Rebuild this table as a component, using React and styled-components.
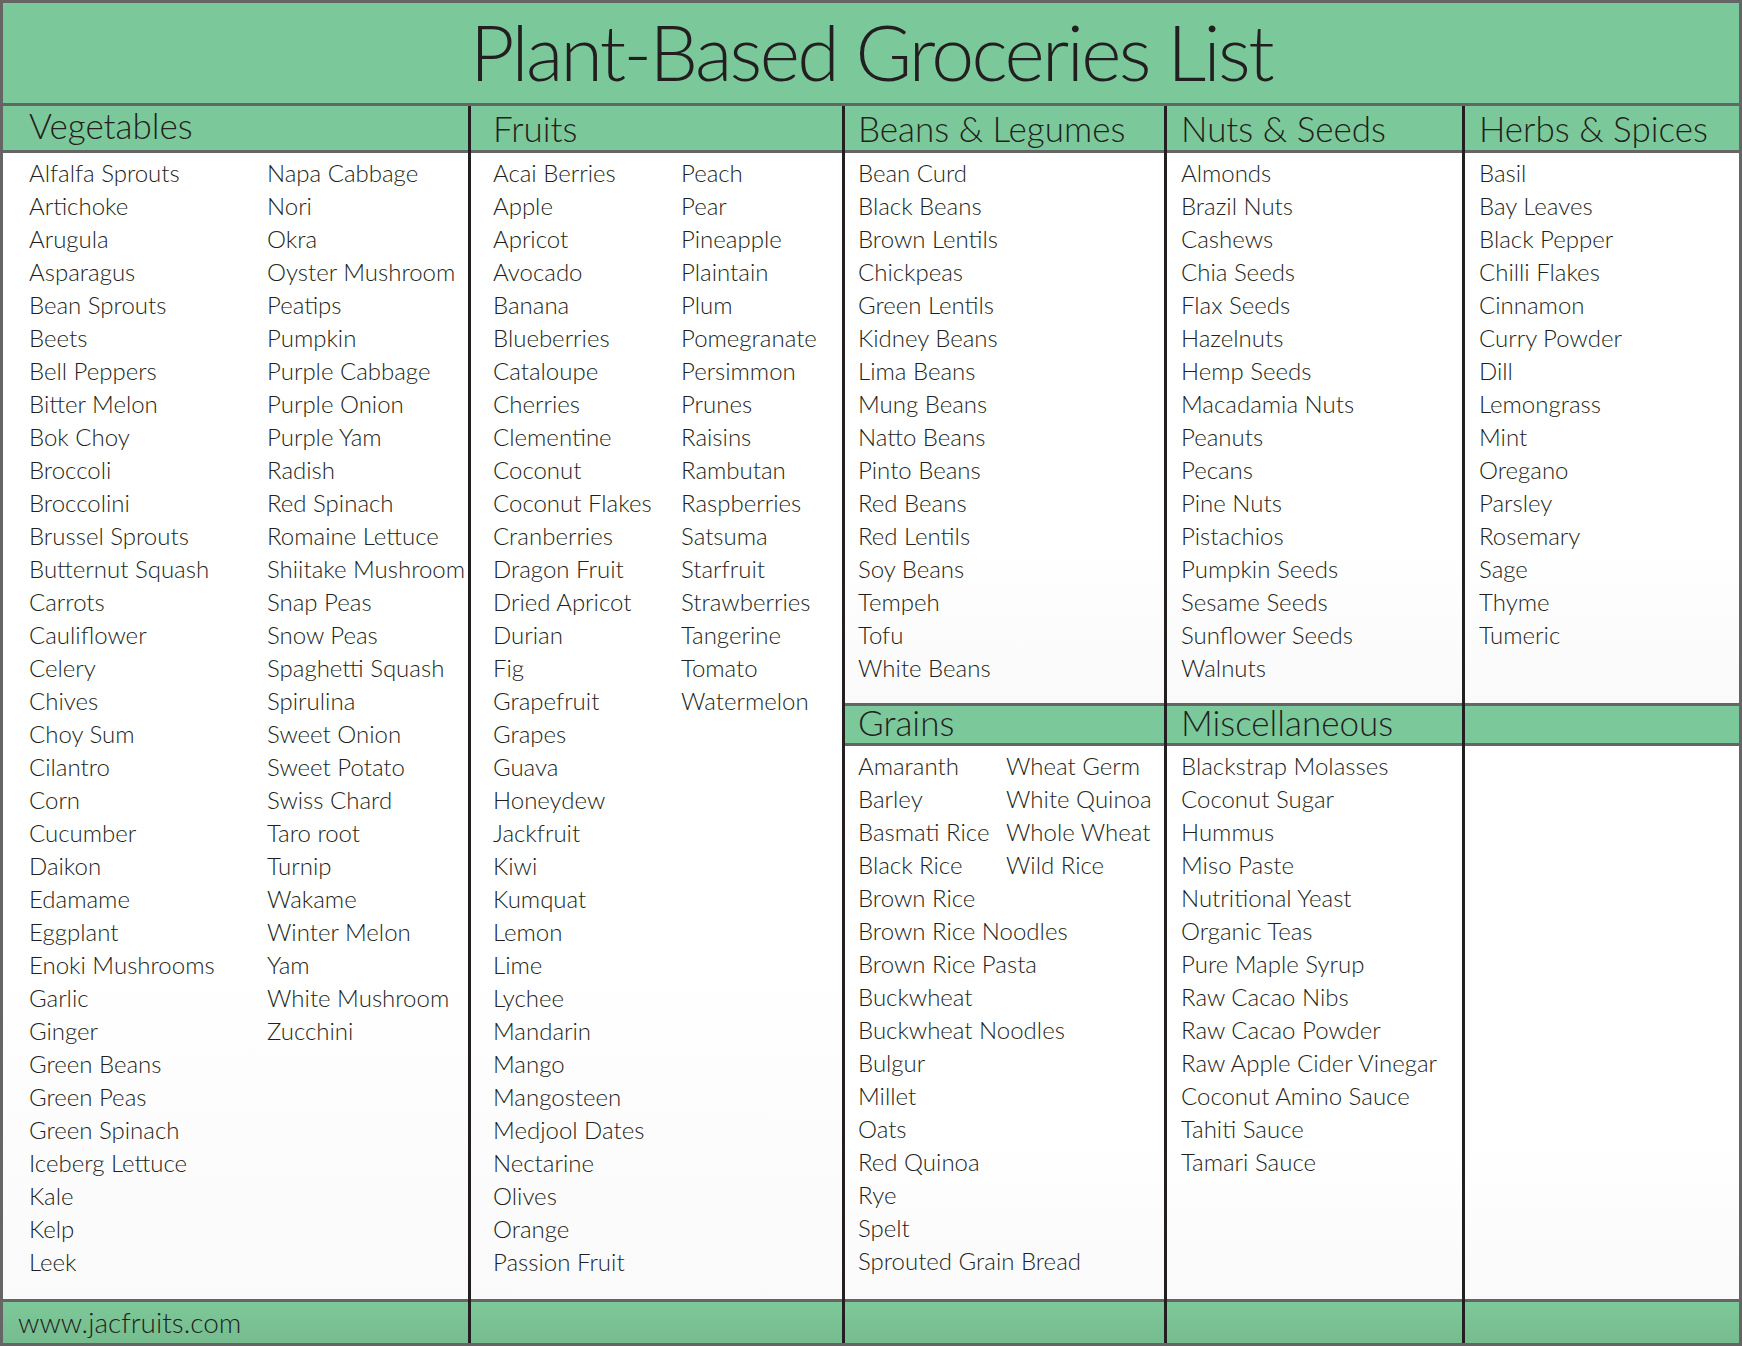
import React from "react";
import styled, { createGlobalStyle } from "styled-components";

const GlobalStyle = createGlobalStyle`
  html, body {
    margin: 0;
    padding: 0;
    background: #ffffff;
  }
  * {
    box-sizing: border-box;
  }
`;

const green = "#7bc99a";
const gray = "#656565";
const ink = "#231f20";

const Sheet = styled.div`
  width: 1742px;
  height: 1346px;
  border: 3px solid ${gray};
  display: flex;
  flex-direction: column;
  font-family: "Lato", "Liberation Sans", sans-serif;
  font-weight: 300;
  color: ${ink};
`;

const TitleBar = styled.div`
  height: 103px;
  flex: none;
  background: ${green};
  border-bottom: 3px solid ${gray};
  display: flex;
  align-items: center;
  justify-content: center;
`;

const Title = styled.h1`
  margin: 0;
  font-size: 77px;
  font-weight: 300;
  line-height: 1;
  letter-spacing: -2.6px;
  padding-bottom: 4px;
`;

const Board = styled.div`
  flex: 1;
  display: grid;
  grid-template-columns: 465px 371px 319px 295px 1fr;
  column-gap: 3px;
  background: ${ink};
  min-height: 0;
`;

const Column = styled.div`
  display: flex;
  flex-direction: column;
  background: #ffffff;
  min-width: 0;
`;

const Header = styled.div`
  height: 47px;
  flex: none;
  background: ${green};
  border-bottom: 3px solid ${gray};
  padding-left: ${(p) => p.$indent}px;
  padding-top: ${(p) => (p.$lift ? 0 : 3)}px;
  font-size: 35px;
  line-height: 39px;
  white-space: nowrap;
`;

const Band = styled(Header)`
  height: 43px;
  border-top: 3px solid ${gray};
  padding-top: 0;
  line-height: 33px;
`;

const Body = styled.div`
  display: flex;
  padding-left: ${(p) => p.$indent}px;
  padding-top: 3px;
  ${(p) => (p.$fixed ? `height: ${p.$fixed}px; flex: none;` : "flex: 1;")}
  background: linear-gradient(#ffffff 70%, #fafafa);
`;

const List = styled.ul`
  list-style: none;
  margin: 0;
  padding: 0;
  width: ${(p) => (p.$width ? `${p.$width}px` : "auto")};
  flex: none;
`;

const Item = styled.li`
  font-size: 24px;
  line-height: 33px;
  white-space: nowrap;
`;

const Footer = styled.div`
  height: 44px;
  flex: none;
  border-top: 3px solid ${gray};
  background: linear-gradient(#7dc89a, #76bc8e);
  padding-left: 15px;
  font-size: 28px;
  line-height: 40px;
  white-space: nowrap;
`;

const vegA = [
  "Alfalfa Sprouts", "Artichoke", "Arugula", "Asparagus", "Bean Sprouts", "Beets",
  "Bell Peppers", "Bitter Melon", "Bok Choy", "Broccoli", "Broccolini", "Brussel Sprouts",
  "Butternut Squash", "Carrots", "Cauliflower", "Celery", "Chives", "Choy Sum", "Cilantro",
  "Corn", "Cucumber", "Daikon", "Edamame", "Eggplant", "Enoki Mushrooms", "Garlic", "Ginger",
  "Green Beans", "Green Peas", "Green Spinach", "Iceberg Lettuce", "Kale", "Kelp", "Leek",
];
const vegB = [
  "Napa Cabbage", "Nori", "Okra", "Oyster Mushroom", "Peatips", "Pumpkin", "Purple Cabbage",
  "Purple Onion", "Purple Yam", "Radish", "Red Spinach", "Romaine Lettuce", "Shiitake Mushroom",
  "Snap Peas", "Snow Peas", "Spaghetti Squash", "Spirulina", "Sweet Onion", "Sweet Potato",
  "Swiss Chard", "Taro root", "Turnip", "Wakame", "Winter Melon", "Yam", "White Mushroom", "Zucchini",
];
const fruitA = [
  "Acai Berries", "Apple", "Apricot", "Avocado", "Banana", "Blueberries", "Cataloupe", "Cherries",
  "Clementine", "Coconut", "Coconut Flakes", "Cranberries", "Dragon Fruit", "Dried Apricot", "Durian",
  "Fig", "Grapefruit", "Grapes", "Guava", "Honeydew", "Jackfruit", "Kiwi", "Kumquat", "Lemon", "Lime",
  "Lychee", "Mandarin", "Mango", "Mangosteen", "Medjool Dates", "Nectarine", "Olives", "Orange", "Passion Fruit",
];
const fruitB = [
  "Peach", "Pear", "Pineapple", "Plaintain", "Plum", "Pomegranate", "Persimmon", "Prunes", "Raisins",
  "Rambutan", "Raspberries", "Satsuma", "Starfruit", "Strawberries", "Tangerine", "Tomato", "Watermelon",
];
const beans = [
  "Bean Curd", "Black Beans", "Brown Lentils", "Chickpeas", "Green Lentils", "Kidney Beans", "Lima Beans",
  "Mung Beans", "Natto Beans", "Pinto Beans", "Red Beans", "Red Lentils", "Soy Beans", "Tempeh", "Tofu", "White Beans",
];
const nuts = [
  "Almonds", "Brazil Nuts", "Cashews", "Chia Seeds", "Flax Seeds", "Hazelnuts", "Hemp Seeds", "Macadamia Nuts",
  "Peanuts", "Pecans", "Pine Nuts", "Pistachios", "Pumpkin Seeds", "Sesame Seeds", "Sunflower Seeds", "Walnuts",
];
const herbs = [
  "Basil", "Bay Leaves", "Black Pepper", "Chilli Flakes", "Cinnamon", "Curry Powder", "Dill", "Lemongrass",
  "Mint", "Oregano", "Parsley", "Rosemary", "Sage", "Thyme", "Tumeric",
];
const grainA = [
  "Amaranth", "Barley", "Basmati Rice", "Black Rice", "Brown Rice", "Brown Rice Noodles", "Brown Rice Pasta",
  "Buckwheat", "Buckwheat Noodles", "Bulgur", "Millet", "Oats", "Red Quinoa", "Rye", "Spelt", "Sprouted Grain Bread",
];
const grainB = ["Wheat Germ", "White Quinoa", "Whole Wheat", "Wild Rice"];
const misc = [
  "Blackstrap Molasses", "Coconut Sugar", "Hummus", "Miso Paste", "Nutritional Yeast", "Organic Teas",
  "Pure Maple Syrup", "Raw Cacao Nibs", "Raw Cacao Powder", "Raw Apple Cider Vinegar", "Coconut Amino Sauce",
  "Tahiti Sauce", "Tamari Sauce",
];

const Items = ({ items, width }) => (
  <List $width={width}>
    {items.map((name) => (
      <Item key={name}>{name}</Item>
    ))}
  </List>
);

export default function App() {
  return (
    <>
      <GlobalStyle />
      <Sheet>
        <TitleBar>
          <Title>Plant-Based Groceries List</Title>
        </TitleBar>
        <Board>
          <Column>
            <Header $indent={26} $lift>Vegetables</Header>
            <Body $indent={26}>
              <Items items={vegA} width={238} />
              <Items items={vegB} />
            </Body>
            <Footer>www.jacfruits.com</Footer>
          </Column>

          <Column>
            <Header $indent={22}>Fruits</Header>
            <Body $indent={22}>
              <Items items={fruitA} width={188} />
              <Items items={fruitB} />
            </Body>
            <Footer />
          </Column>

          <Column>
            <Header $indent={13}>Beans &amp; Legumes</Header>
            <Body $indent={13} $fixed={550}>
              <Items items={beans} />
            </Body>
            <Band $indent={13}>Grains</Band>
            <Body $indent={13}>
              <Items items={grainA} width={148} />
              <Items items={grainB} />
            </Body>
            <Footer />
          </Column>

          <Column>
            <Header $indent={14}>Nuts &amp; Seeds</Header>
            <Body $indent={14} $fixed={550}>
              <Items items={nuts} />
            </Body>
            <Band $indent={14}>Miscellaneous</Band>
            <Body $indent={14}>
              <Items items={misc} />
            </Body>
            <Footer />
          </Column>

          <Column>
            <Header $indent={14}>Herbs &amp; Spices</Header>
            <Body $indent={14} $fixed={550}>
              <Items items={herbs} />
            </Body>
            <Band $indent={14} />
            <Body $indent={14} />
            <Footer />
          </Column>
        </Board>
      </Sheet>
    </>
  );
}
